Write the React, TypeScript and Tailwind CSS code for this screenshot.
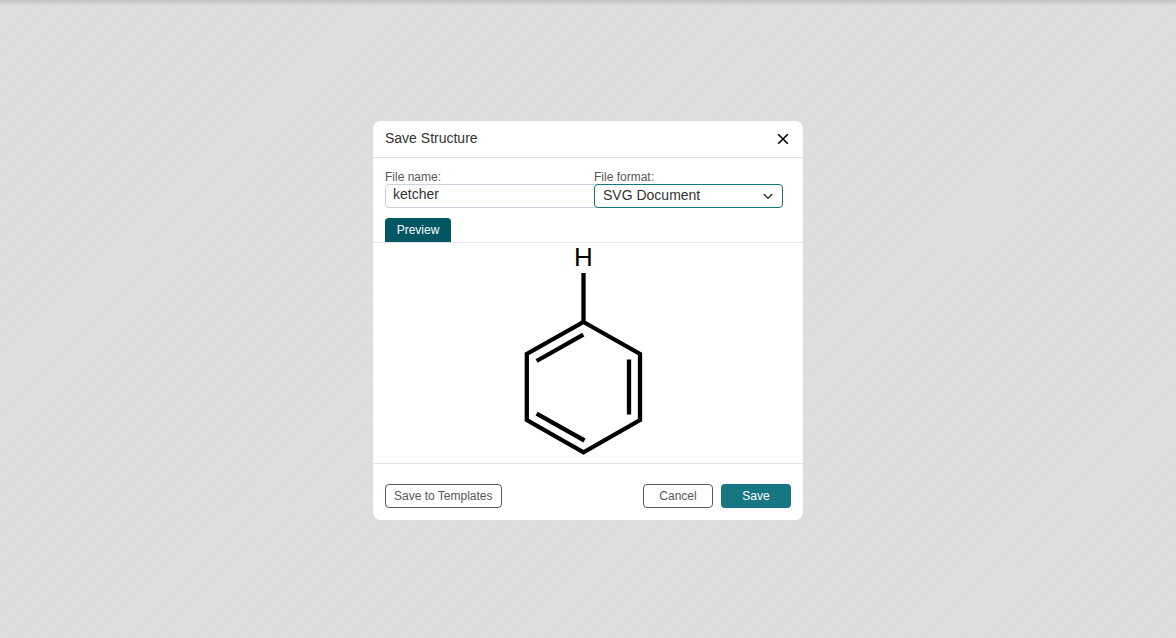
import { useState } from "react";

function BenzenePreview() {
  return (
    <svg
      viewBox="0 0 430 220"
      className="h-[220px] w-full"
      role="img"
      aria-label="Structure preview"
    >
      <g fill="none" stroke="#000" strokeWidth="4.3" strokeLinejoin="miter">
        <path d="M210.5 79 L267 111 V177 L210.5 209.3 L153.8 177 V111 Z" />
        <path d="M210.5 30 V79" />
        <path d="M163.6 118 L210.3 91.7" />
        <path d="M256 116.5 V171.5" />
        <path d="M163.6 170.7 L211.5 197.5" />
      </g>
      <text
        x="210.5"
        y="22.5"
        textAnchor="middle"
        fontSize="26"
        fontFamily="'Liberation Sans', Arial, sans-serif"
        fill="#000"
      >
        H
      </text>
    </svg>
  );
}

export default function App() {
  const [name, setName] = useState("ketcher");
  const [format, setFormat] = useState("svg");

  return (
    <div className="flex min-h-screen flex-col bg-[#dddddd] bg-[repeating-linear-gradient(135deg,#dddddd_0px,#dddddd_11px,#dbdbdb_13px,#dddddd_14px)] font-['Liberation_Sans',Arial,sans-serif]">
      <div className="h-1.5 bg-linear-to-b from-black/12 to-transparent" />
      <main className="-mt-1.5 flex grow items-center justify-center pt-[3px]">
        <form
          role="dialog"
          aria-labelledby="dialog-title"
          onSubmit={(e) => e.preventDefault()}
          className="w-full max-w-[430px] rounded-lg bg-white"
        >
          <header className="flex h-[37px] items-center justify-between border-b border-[#e1e1e5] px-3">
            <h1 id="dialog-title" className="pb-0.5 text-sm text-[#333333]">
              Save Structure
            </h1>
            <button type="button" aria-label="Close" className="flex size-4 items-center justify-center text-black">
              <svg viewBox="0 0 16 16" className="size-4" fill="none" stroke="currentColor" strokeWidth="1.6">
                <path d="M3.2 3.2 L12.8 12.8 M12.8 3.2 L3.2 12.8" />
              </svg>
            </button>
          </header>

          <div className="flex pt-3 pr-5 pl-3">
            <div className="min-w-0 flex-1">
              <label htmlFor="file-name" className="block text-xs leading-[14px] text-[#585858]">
                File name:
              </label>
              <input
                id="file-name"
                value={name}
                onChange={(e) => setName(e.target.value)}
                className="block h-6 w-[calc(100%+8px)] rounded border border-[#cad3dd] bg-white px-[7px] pb-1 text-sm leading-4 text-[#333333] outline-none"
              />
            </div>
            <div className="relative w-[189px]">
              <label htmlFor="file-format" className="block text-xs leading-[14px] text-[#585858]">
                File format:
              </label>
              <select
                id="file-format"
                value={format}
                onChange={(e) => setFormat(e.target.value)}
                className="block h-6 w-full appearance-none rounded border border-[#167782] bg-white px-2 pb-0.5 text-sm leading-5 text-[#333333] outline-none"
              >
                <option value="svg">SVG Document</option>
                <option value="png">PNG Image</option>
              </select>
              <svg
                viewBox="0 0 16 16"
                className="pointer-events-none absolute right-[7px] bottom-1 size-4 text-[#333333]"
                fill="none"
                stroke="currentColor"
                strokeWidth="1.5"
              >
                <path d="M3.8 6 L8 10.2 L12.2 6" />
              </svg>
            </div>
          </div>

          <div role="tablist" className="mt-[10px] flex border-b border-[#e1e5ea] px-3">
            <button
              type="button"
              role="tab"
              aria-selected="true"
              className="h-6 w-[66px] rounded-t bg-[#005662] text-xs text-white"
            >
              Preview
            </button>
          </div>

          <div role="tabpanel" className="border-b border-[#e1e1e5]">
            <BenzenePreview />
          </div>

          <footer className="flex gap-2 px-3 pt-5 pb-3 text-xs">
            <button type="button" className="mr-auto h-6 rounded border border-[#585858] px-2 text-[#585858]">
              Save to Templates
            </button>
            <button type="button" className="h-6 w-[70px] rounded border border-[#585858] text-[#585858]">
              Cancel
            </button>
            <button type="submit" className="h-6 w-[70px] rounded bg-[#167782] text-white">
              Save
            </button>
          </footer>
        </form>
      </main>
    </div>
  );
}
